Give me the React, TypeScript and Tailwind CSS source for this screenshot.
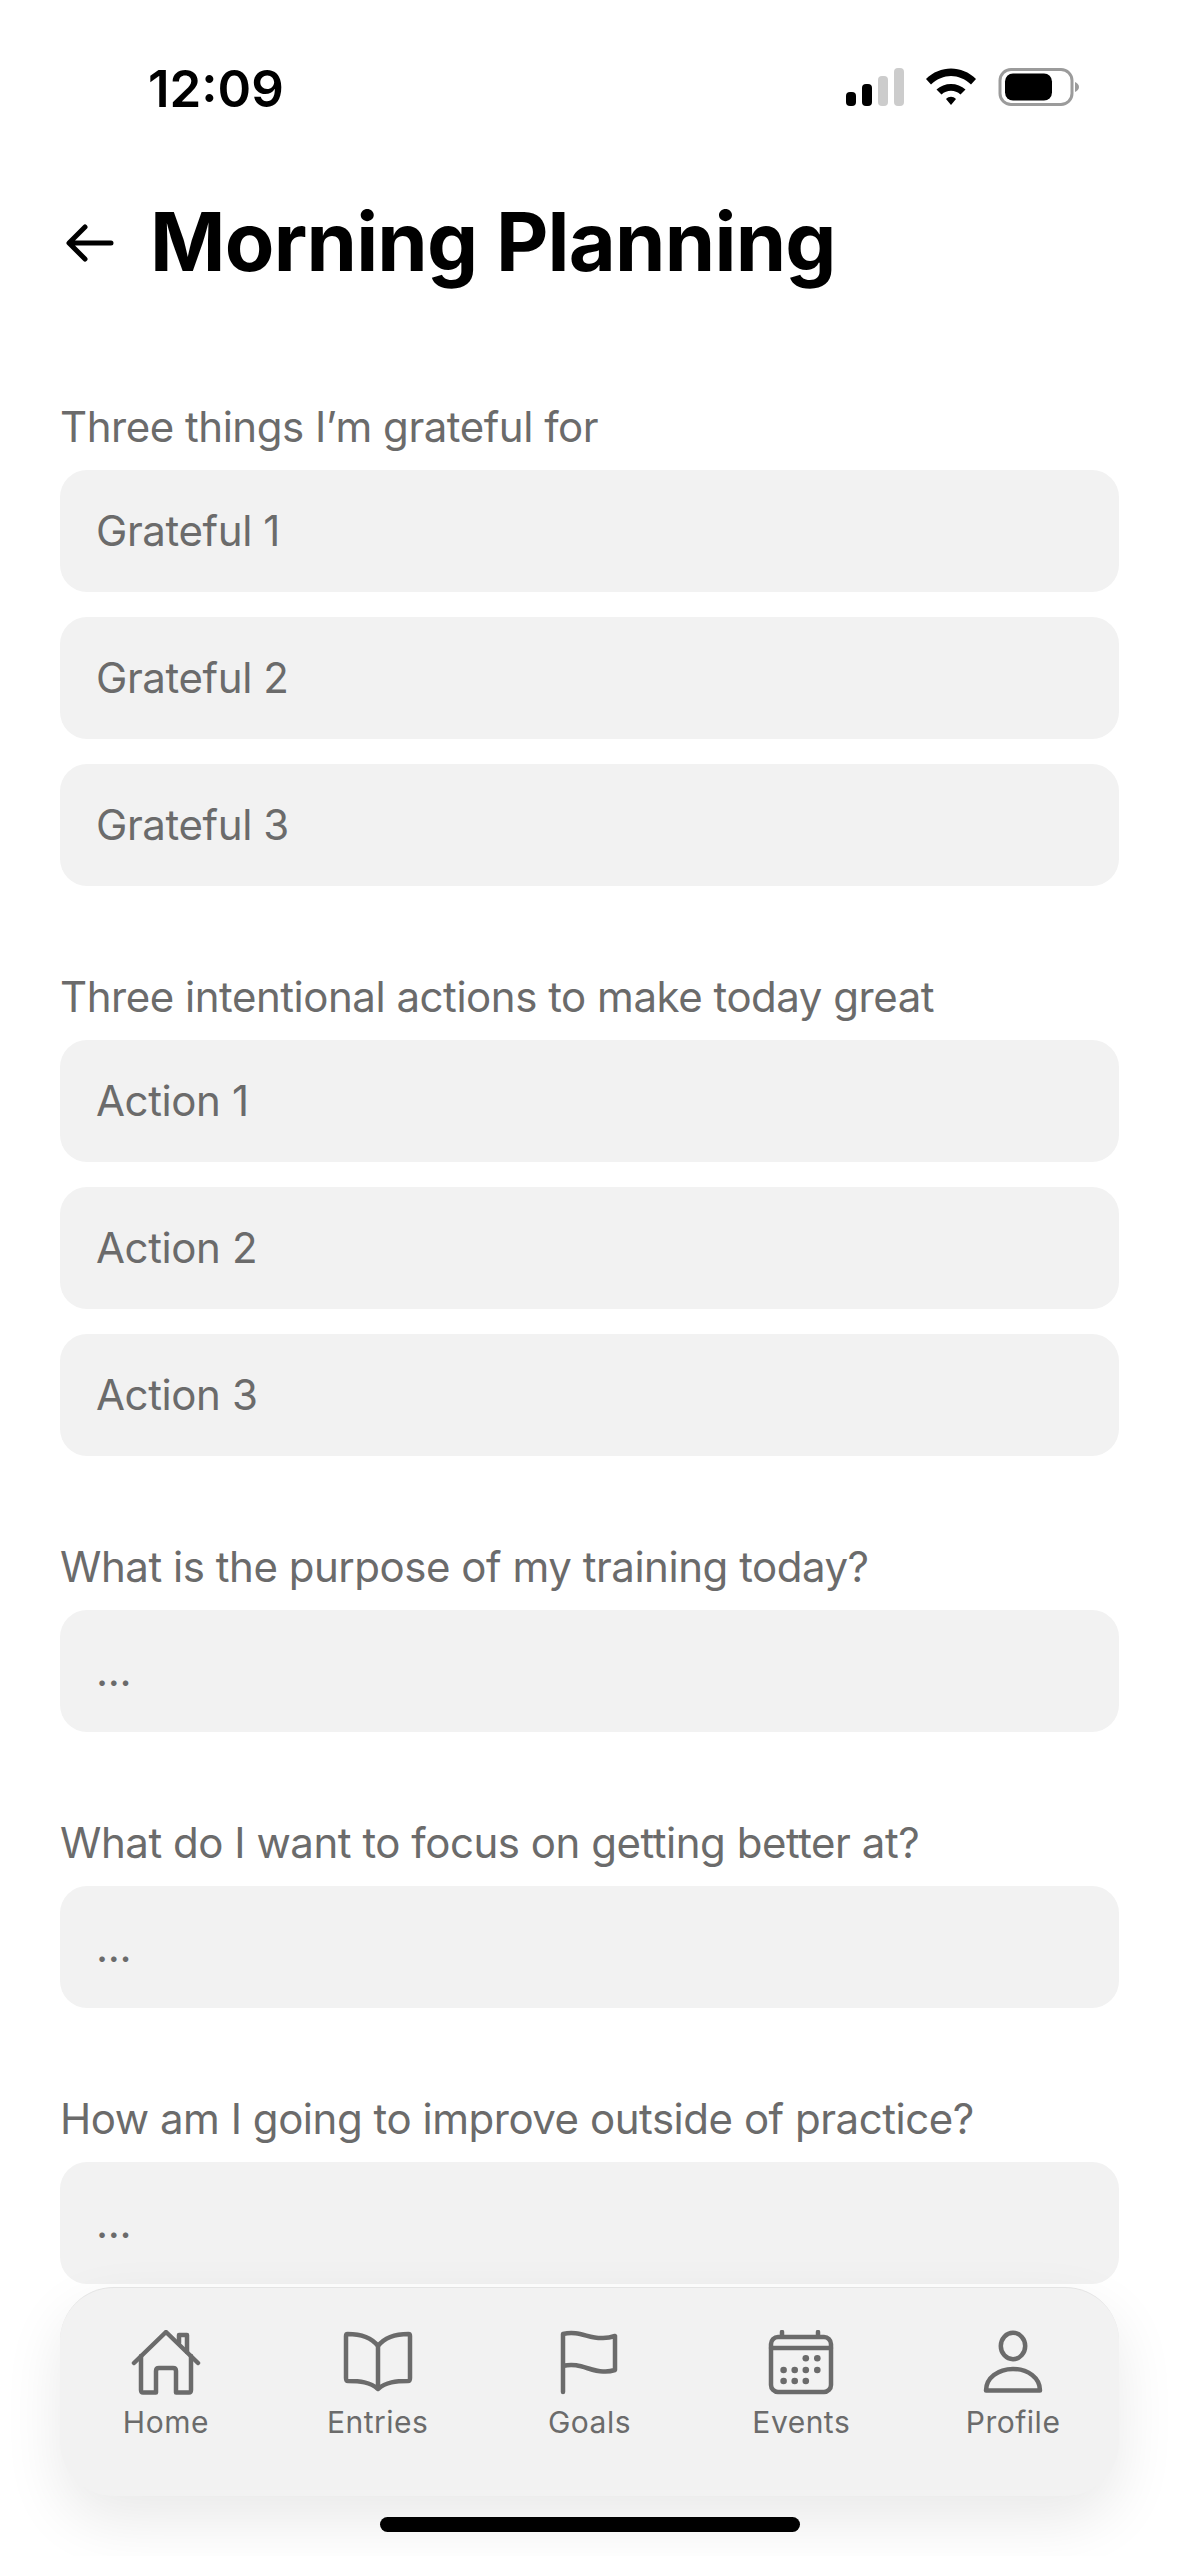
import React from "react";

const Field = ({ text }: { text: string }) => (
  <div className="h-[122px] rounded-[27px] bg-[#f2f2f2] pl-[36px] flex items-center text-[42px] leading-[50px] tracking-[-0.4px] text-[#6b6b6b]">
    {text}
  </div>
);

const Section = ({ label, fields }: { label: string; fields: string[] }) => (
  <section className="flex flex-col">
    <div className="h-[50px] text-[42px] leading-[50px] tracking-[-0.47px] text-[#6b6b6b] mb-[18px]">{label}</div>
    <div className="flex flex-col gap-[25px]">
      {fields.map((f, i) => (
        <Field key={i} text={f} />
      ))}
    </div>
  </section>
);

const stroke = {
  fill: "none",
  stroke: "#6b6b6b",
  strokeWidth: 4.5,
  strokeLinecap: "round" as const,
  strokeLinejoin: "round" as const,
};

const HomeIcon = () => (
  <svg width="80" height="66" viewBox="0 0 80 66" {...stroke}>
    <path d="M8 33 L40 2 L72 33" />
    <path d="M15 26 V60 Q15 62.5 17 62.5 H30 V41 Q30 38 33 38 H47 Q50 38 50 41 V62.5 H63 Q65 62.5 65 60 V26" />
    <path d="M53 13 V5 H61 V22" />
  </svg>
);

const BookIcon = () => (
  <svg width="80" height="66" viewBox="0 0 80 66" {...stroke}>
    <path d="M40 16 C33 7 22 4 9.5 4 Q8 4 8 6 V48 Q8 51 10 51 C22 51 32 52 40 59 C48 52 58 51 70 51 Q72 51 72 48 V6 Q72 4 70.5 4 C58 4 47 7 40 16 V59" />
  </svg>
);

const FlagIcon = () => (
  <svg width="80" height="66" viewBox="0 0 80 66" {...stroke}>
    <path d="M14 62 V4 C30 0 40 9 54 8 Q60 8 66 6 V40 Q60 42 54 41.5 C40 41 30 32 14 36" />
  </svg>
);

const CalendarIcon = () => (
  <svg width="80" height="66" viewBox="0 0 80 66">
    <g {...stroke}>
      <rect x="10" y="7" width="60" height="55" rx="7" />
      <path d="M10 18 H70 M21 2 V6 M57 2 V6" />
    </g>
    <g fill="#6b6b6b">
      {[
        [44.8, 28.3],
        [56.3, 28.3],
        [22.6, 40],
        [33.7, 40],
        [44.8, 40],
        [56.3, 40],
        [22.6, 51],
        [33.7, 51],
        [44.8, 51],
      ].map(([x, y], i) => (
        <circle key={i} cx={x} cy={y} r="3.3" />
      ))}
    </g>
  </svg>
);

const ProfileIcon = () => (
  <svg width="80" height="66" viewBox="0 0 80 66" {...stroke}>
    <ellipse cx="40" cy="16" rx="12.2" ry="13.2" />
    <path d="M13 60.5 C13 48 25 39 40 39 C55 39 67 48 67 60.5 Z" />
  </svg>
);

const NavItem = ({ icon, label }: { icon: React.ReactNode; label: string }) => (
  <div className="flex-1 flex flex-col items-center">
    {icon}
    <span className="mt-[8px] text-[30px] leading-[36px] tracking-[0.5px] text-[#6b6b6b]">{label}</span>
  </div>
);

export default function App() {
  return (
    <div className="relative w-[1179px] h-[2556px] overflow-hidden bg-white font-['Inter',sans-serif]">
      <div className="h-[197px] pl-[148px] pr-[98px] pt-[59px] flex justify-between items-start">
        <span className="text-[51px] leading-[60px] font-semibold text-black">12:09</span>
        <svg width="236" height="40" viewBox="0 0 236 40" className="mt-[9px]">
          <rect x="1" y="24" width="10" height="14" rx="4" fill="#000" />
          <rect x="17" y="16" width="10" height="22" rx="4" fill="#000" />
          <rect x="33" y="8" width="10" height="30" rx="4" fill="#cccccc" />
          <rect x="49" y="0" width="10" height="38" rx="4" fill="#cccccc" />
          <path
            d="M81 11 C95 -3 117 -3 131 11 L126 16.5 C114 5 98 5 86 16.5 Z M91.5 21.5 C99 14 113 14 120.5 21.5 L115.5 26.5 C110 21.5 102 21.5 96.5 26.5 Z M101 31 C104 28 108 28 111 31 L106 37 Z"
            fill="#000"
          />
          <rect x="155" y="1.5" width="72" height="35" rx="11" fill="none" stroke="#9b9b9b" strokeWidth="3" />
          <rect x="160" y="5.5" width="47" height="27" rx="8" fill="#000" />
          <path d="M230 14 Q234 16 234 19 Q234 22 230 24 Z" fill="#9b9b9b" />
        </svg>
      </div>

      <header className="h-[92px] pl-[64px] flex items-center gap-[34px]">
        <svg width="52" height="44" viewBox="0 0 52 44" fill="none" stroke="#000" strokeWidth="5" strokeLinecap="round" strokeLinejoin="round">
          <path d="M5.5 22 H47 M21 6 L5 22 L21 38" />
        </svg>
        <h1 className="text-[81px] leading-[90px] mb-[2px] font-bold tracking-[-0.75px] text-black">Morning Planning</h1>
      </header>

      <main className="px-[60px] pt-[113px] flex flex-col gap-[86px]">
        <Section label="Three things I’m grateful for" fields={["Grateful 1", "Grateful 2", "Grateful 3"]} />
        <Section label="Three intentional actions to make today great" fields={["Action 1", "Action 2", "Action 3"]} />
        <Section label="What is the purpose of my training today?" fields={["..."]} />
        <Section label="What do I want to focus on getting better at?" fields={["..."]} />
        <Section label="How am I going to improve outside of practice?" fields={["..."]} />
      </main>

      <nav className="absolute left-[60px] right-[60px] top-[2287px] h-[209px] rounded-[54px] bg-[#f2f2f2] border-t border-[#e4e4e4] shadow-[0_24px_60px_rgba(0,0,0,0.09)] pt-[42px] flex">
        <NavItem icon={<HomeIcon />} label="Home" />
        <NavItem icon={<BookIcon />} label="Entries" />
        <NavItem icon={<FlagIcon />} label="Goals" />
        <NavItem icon={<CalendarIcon />} label="Events" />
        <NavItem icon={<ProfileIcon />} label="Profile" />
      </nav>

      <div className="absolute left-[380px] top-[2517px] w-[420px] h-[15px] rounded-full bg-black" />
    </div>
  );
}
